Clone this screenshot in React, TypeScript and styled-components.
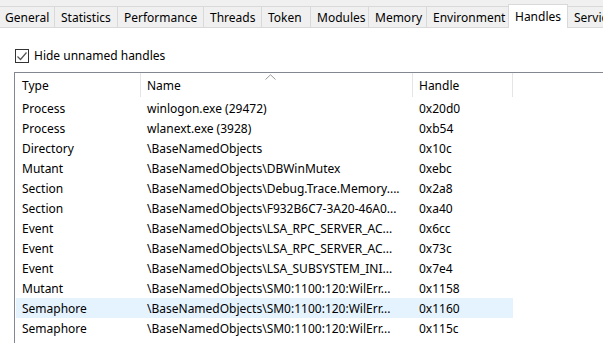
import styled, { createGlobalStyle } from 'styled-components';

const GlobalStyle = createGlobalStyle`
  html, body {
    margin: 0;
    padding: 0;
    background: #f0f0f0;
  }
  body {
    font-family: "Noto Sans", "Liberation Sans", sans-serif;
    font-size: 12px;
    color: #000;
  }
`;

const tabs = [
  { label: 'General', width: 55 },
  { label: 'Statistics', width: 63 },
  { label: 'Performance', width: 86 },
  { label: 'Threads', width: 58 },
  { label: 'Token', width: 49 },
  { label: 'Modules', width: 58 },
  { label: 'Memory', width: 58 },
  { label: 'Environment', width: 82 },
  { label: 'Handles', width: 60, active: true },
  { label: 'Services', width: 60 },
];

const rows = [
  ['Process', 'winlogon.exe (29472)', '0x20d0'],
  ['Process', 'wlanext.exe (3928)', '0xb54'],
  ['Directory', '\\BaseNamedObjects', '0x10c'],
  ['Mutant', '\\BaseNamedObjects\\DBWinMutex', '0xebc'],
  ['Section', '\\BaseNamedObjects\\Debug.Trace.Memory....', '0x2a8'],
  ['Section', '\\BaseNamedObjects\\F932B6C7-3A20-46A0...', '0xa40'],
  ['Event', '\\BaseNamedObjects\\LSA_RPC_SERVER_AC...', '0x6cc'],
  ['Event', '\\BaseNamedObjects\\LSA_RPC_SERVER_AC...', '0x73c'],
  ['Event', '\\BaseNamedObjects\\LSA_SUBSYSTEM_INI...', '0x7e4'],
  ['Mutant', '\\BaseNamedObjects\\SM0:1100:120:WilErr...', '0x1158'],
  ['Semaphore', '\\BaseNamedObjects\\SM0:1100:120:WilErr...', '0x1160'],
  ['Semaphore', '\\BaseNamedObjects\\SM0:1100:120:WilErr...', '0x115c'],
];

const HOT_ROW = 10;
const COLS = [125, 272, 100];

export default function App() {
  return (
    <>
      <GlobalStyle />
      <Window>
        <TabStrip>
          {tabs.map((t, i) => (
            <Tab key={t.label} $width={t.width} $active={!!t.active} $first={i === 0}>
              {t.label}
            </Tab>
          ))}
        </TabStrip>
        <Panel>
          <CheckRow>
            <CheckBox>
              <svg width="12" height="12" viewBox="0 0 12 12">
                <polyline points="1.5,6.5 4.5,9.5 10.5,2.5" fill="none" stroke="#555" strokeWidth="1.2" />
              </svg>
            </CheckBox>
            <span>Hide unnamed handles</span>
          </CheckRow>
          <ListView>
            <HeaderRow>
              <HeaderCell $width={COLS[0]}>Type</HeaderCell>
              <HeaderCell $width={COLS[1]}>
                Name
                <SortArrow>
                  <svg width="11" height="6" viewBox="0 0 11 6">
                    <polyline points="0.5,5.5 5.5,0.8 10.5,5.5" fill="none" stroke="#9a9a9a" strokeWidth="1" />
                  </svg>
                </SortArrow>
              </HeaderCell>
              <HeaderCell $width={COLS[2]}>Handle</HeaderCell>
            </HeaderRow>
            {rows.map((r, i) => (
              <Row key={i} $hot={i === HOT_ROW}>
                <Cell $width={COLS[0]}>{r[0]}</Cell>
                <Cell $width={COLS[1]}>{r[1]}</Cell>
                <Cell $width={COLS[2]}>{r[2]}</Cell>
              </Row>
            ))}
          </ListView>
        </Panel>
      </Window>
    </>
  );
}

const Window = styled.div`
  width: 603px;
  height: 343px;
  overflow: hidden;
  display: flex;
  flex-direction: column;
  background: #f0f0f0;
`;

const TabStrip = styled.div`
  display: flex;
  align-items: flex-end;
  height: 28px;
  box-sizing: border-box;
  border-bottom: 1px solid #d9d9d9;
  flex-shrink: 0;
`;

const Tab = styled.div<{ $width: number; $active: boolean; $first: boolean }>`
  box-sizing: border-box;
  flex-shrink: 0;
  width: ${(p) => p.$width}px;
  height: ${(p) => (p.$active ? 24 : 21)}px;
  margin-bottom: ${(p) => (p.$active ? -1 : 0)}px;
  margin-left: ${(p) => (p.$active ? -1 : 0)}px;
  padding-left: ${(p) => (p.$first ? 5 : 6)}px;
  display: flex;
  align-items: ${(p) => (p.$active ? 'flex-start' : 'center')};
  padding-top: ${(p) => (p.$active ? 3 : 0)}px;
  white-space: nowrap;
  overflow: hidden;
  background: ${(p) => (p.$active ? '#fff' : '#f0f0f0')};
  border-top: 1px solid #d9d9d9;
  border-right: 1px solid #d9d9d9;
  border-left: ${(p) => (p.$active ? '1px solid #d9d9d9' : 'none')};
  position: relative;
  z-index: ${(p) => (p.$active ? 1 : 0)};
`;

const Panel = styled.div`
  flex: 1;
  background: #fff;
  padding: 20px 0 0 14px;
  display: flex;
  flex-direction: column;
`;

const CheckRow = styled.label`
  display: flex;
  align-items: center;
  gap: 5px;
  margin-left: 1px;
  height: 15px;
`;

const CheckBox = styled.span`
  box-sizing: border-box;
  width: 14px;
  height: 14px;
  border: 1px solid #333;
  display: flex;
  align-items: center;
  justify-content: center;
  background: #fff;
`;

const ListView = styled.div`
  margin-top: 9px;
  border-top: 1px solid #828790;
  border-left: 1px solid #828790;
  flex: 1;
  padding-left: 1px;
`;

const HeaderRow = styled.div`
  display: flex;
  height: 25px;
  align-items: stretch;
`;

const HeaderCell = styled.div<{ $width: number }>`
  box-sizing: border-box;
  position: relative;
  width: ${(p) => p.$width}px;
  padding: 1px 0 0 6px;
  display: flex;
  align-items: center;
  border-right: 1px solid #e5e5e5;
  margin-bottom: 1px;
`;

const SortArrow = styled.span`
  position: absolute;
  top: 1px;
  left: 124px;
  display: flex;
`;

const Row = styled.div<{ $hot: boolean }>`
  display: flex;
  height: 20px;
  align-items: center;
  width: 497px;
  background: ${(p) => (p.$hot ? '#e5f3ff' : 'transparent')};
`;

const Cell = styled.div<{ $width: number }>`
  box-sizing: border-box;
  width: ${(p) => p.$width}px;
  padding-left: 6px;
  white-space: nowrap;
  overflow: hidden;
`;
